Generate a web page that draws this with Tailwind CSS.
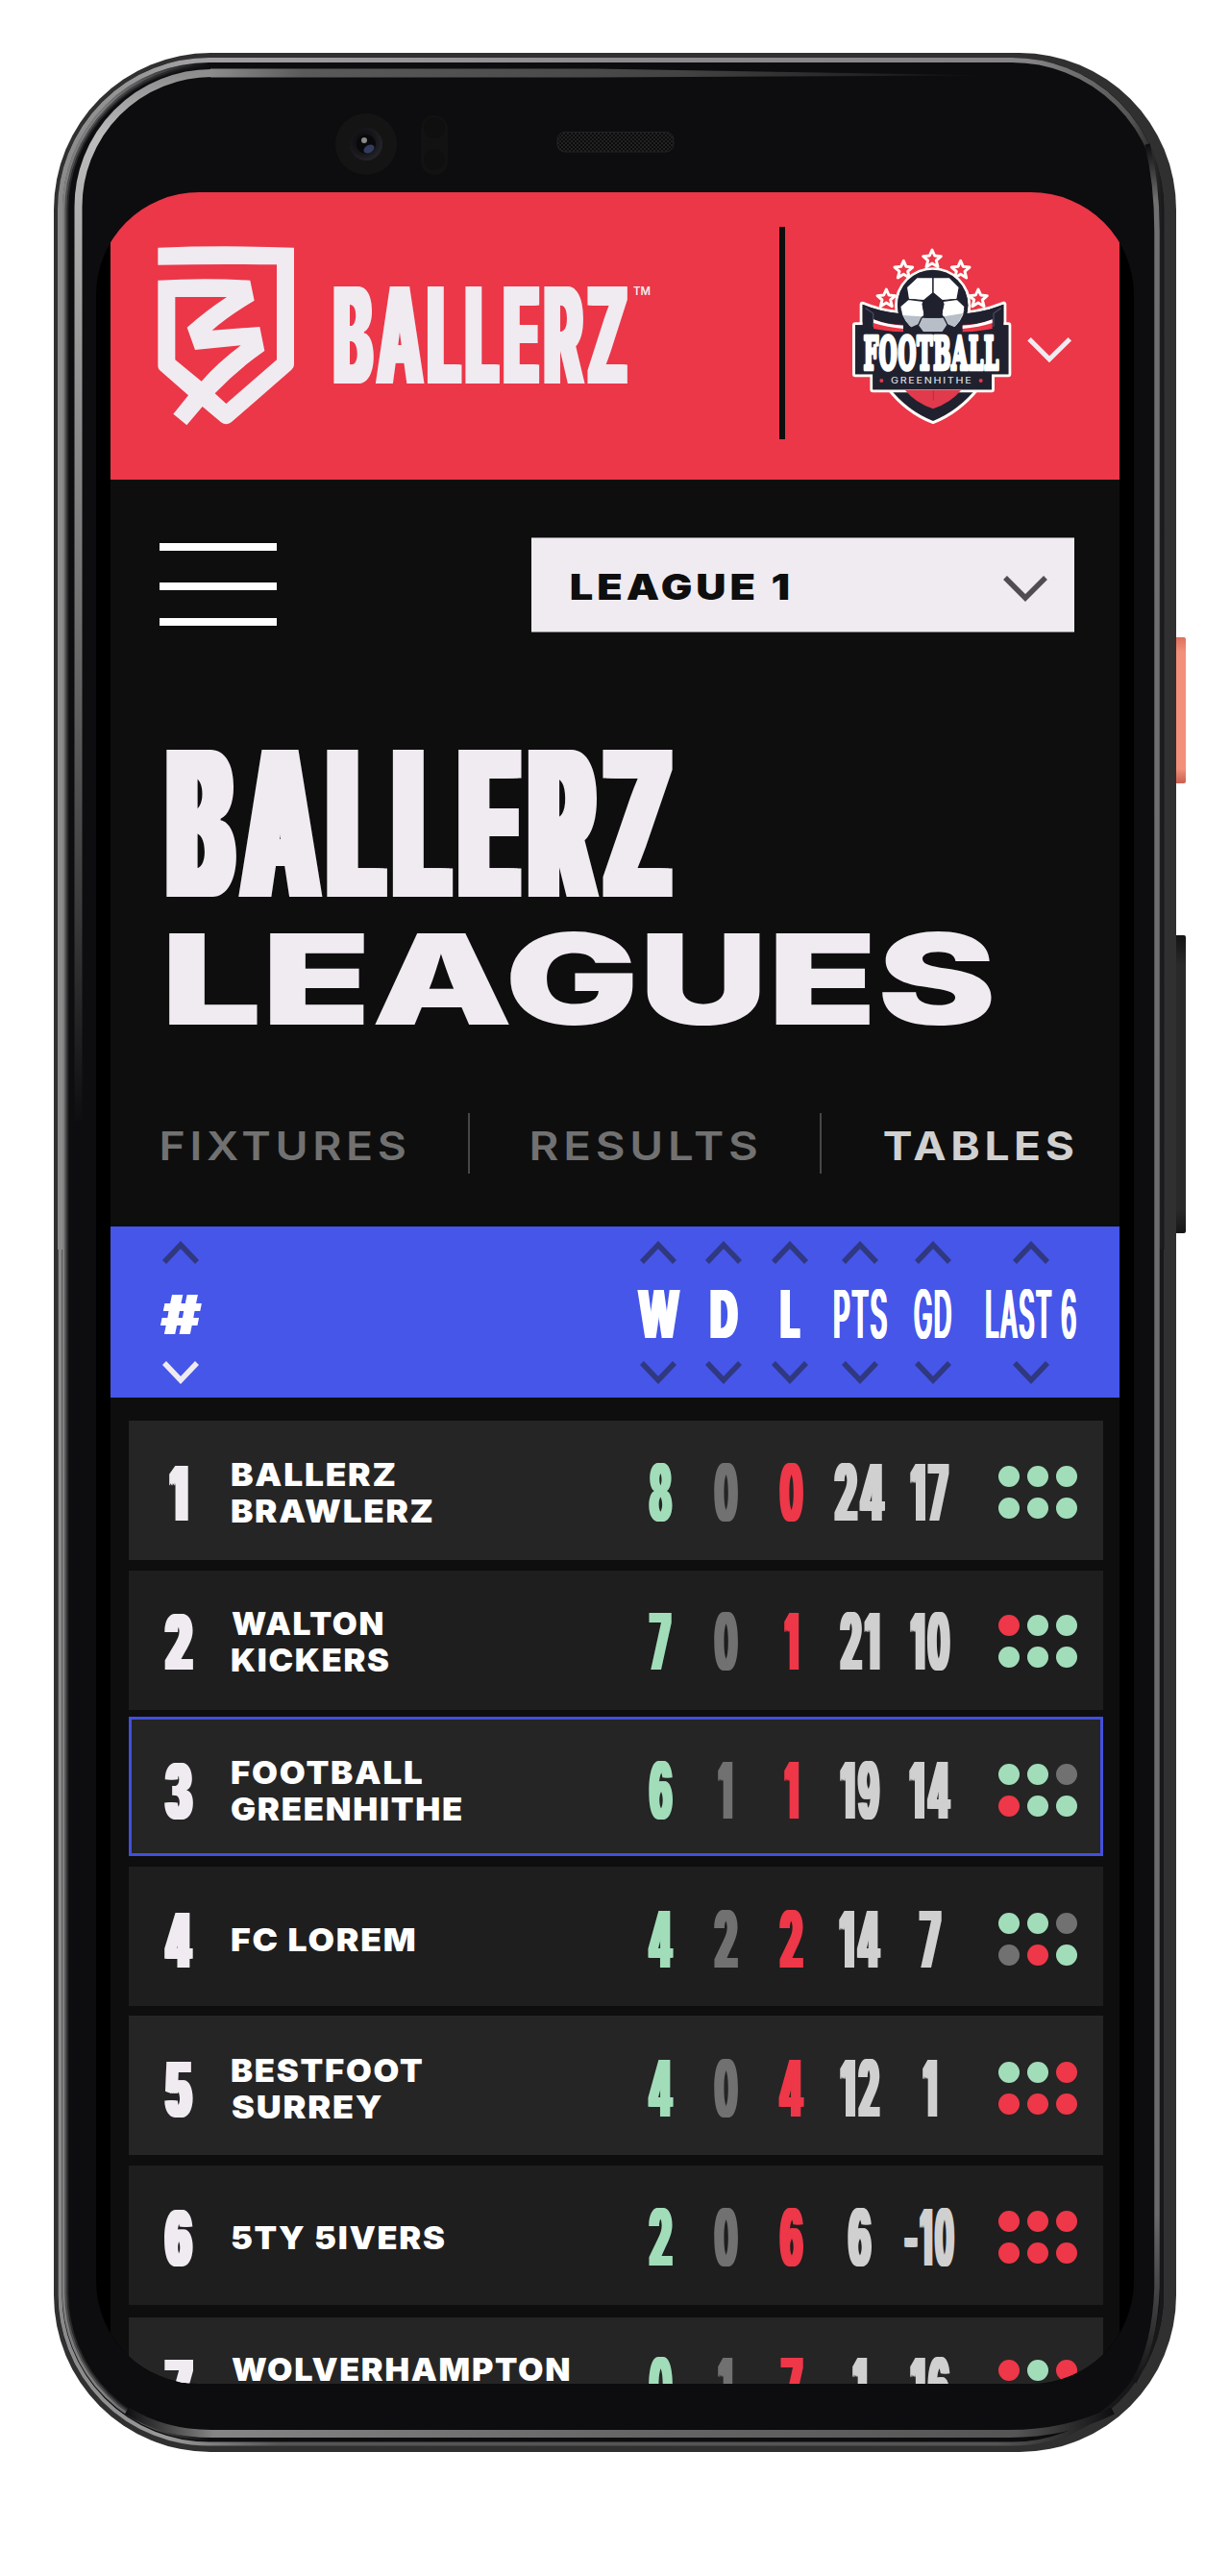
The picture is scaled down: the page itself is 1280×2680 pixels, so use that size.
<!DOCTYPE html>
<html lang="en">
<head>
<meta charset="utf-8">
<title>Ballerz Leagues</title>
<script src="https://cdn.jsdelivr.net/npm/@tailwindcss/browser@4"></script>
</head>
<body class="bg-white">
<main class="relative w-[1280px] h-[2680px] overflow-hidden pt-[200px] pl-[100px] font-['Inter',sans-serif]">

  <!-- handset body -->
  <svg class="absolute left-0 top-0" width="1280" height="2680" viewBox="0 0 1280 2680" fill="none">
    <defs>
      <linearGradient id="edge" gradientUnits="userSpaceOnUse" x1="60" y1="0" x2="1211" y2="0">
        <stop offset="0" stop-color="#8a8a8a"/><stop offset=".12" stop-color="#a2a0a2"/><stop offset=".5" stop-color="#8d8b8d"/><stop offset=".88" stop-color="#858385"/><stop offset=".97" stop-color="#555"/><stop offset="1" stop-color="#18181a"/>
      </linearGradient>
      <linearGradient id="edgeLow" gradientUnits="userSpaceOnUse" x1="60" y1="0" x2="1211" y2="0">
        <stop offset="0" stop-color="#8a8a8a"/><stop offset=".1" stop-color="#999"/><stop offset=".2" stop-color="#555"/><stop offset=".85" stop-color="#555"/><stop offset=".95" stop-color="#18181a"/>
      </linearGradient>
      <linearGradient id="soft" gradientUnits="userSpaceOnUse" x1="60" y1="0" x2="218" y2="0">
        <stop offset="0" stop-color="#999"/><stop offset=".3" stop-color="#999"/><stop offset="1" stop-color="#999" stop-opacity="0"/>
      </linearGradient>
      <linearGradient id="lineLeft" gradientUnits="userSpaceOnUse" x1="0" y1="76" x2="0" y2="1170">
        <stop offset="0" stop-color="#8d8d8d"/><stop offset=".06" stop-color="#bcbcbc"/><stop offset=".25" stop-color="#9a9a9a"/><stop offset=".5" stop-color="#737373"/><stop offset=".8" stop-color="#3a3a3b"/><stop offset="1" stop-color="#0d0d0f"/>
      </linearGradient>
      <linearGradient id="lineTop" gradientUnits="userSpaceOnUse" x1="218" y1="0" x2="1030" y2="0">
        <stop offset="0" stop-color="#8d8d8d"/><stop offset=".12" stop-color="#5a5a5a"/><stop offset=".6" stop-color="#444"/><stop offset="1" stop-color="#0d0d0f"/>
      </linearGradient>
      <linearGradient id="lineRight" gradientUnits="userSpaceOnUse" x1="0" y1="150" x2="0" y2="2490">
        <stop offset="0" stop-color="#0d0d0f"/><stop offset=".025" stop-color="#707070"/><stop offset=".92" stop-color="#6a6a6a"/><stop offset=".97" stop-color="#333"/><stop offset="1" stop-color="#0d0d0f"/>
      </linearGradient>
      <linearGradient id="lineBottom" gradientUnits="userSpaceOnUse" x1="130" y1="0" x2="1160" y2="0">
        <stop offset="0" stop-color="#0d0d0f"/><stop offset=".09" stop-color="#858585"/><stop offset=".5" stop-color="#666"/><stop offset=".9" stop-color="#555"/><stop offset="1" stop-color="#0d0d0f"/>
      </linearGradient>
      <linearGradient id="power" x1="0" y1="0" x2="0" y2="1">
        <stop offset="0" stop-color="#df6f5d"/><stop offset=".1" stop-color="#f29079"/><stop offset=".9" stop-color="#f29079"/><stop offset="1" stop-color="#c95f50"/>
      </linearGradient>
      <linearGradient id="volume" x1="0" y1="0" x2="0" y2="1">
        <stop offset="0" stop-color="#141414"/><stop offset=".1" stop-color="#292929"/><stop offset=".92" stop-color="#292929"/><stop offset="1" stop-color="#161616"/>
      </linearGradient>
      <radialGradient id="lens" cx=".4" cy=".4" r=".65"><stop offset="0" stop-color="#0a0a0c"/><stop offset=".6" stop-color="#17171b"/><stop offset="1" stop-color="#26262b"/></radialGradient>
      <pattern id="mesh" width="4" height="4" patternUnits="userSpaceOnUse"><rect width="4" height="4" fill="#0c0c0c"/><rect width="2" height="2" fill="#222"/><rect x="2" y="2" width="2" height="2" fill="#222"/></pattern>
    </defs>
    <rect x="1216" y="663" width="18" height="152" rx="2" fill="url(#power)"/>
    <rect x="1216" y="973" width="18" height="310" rx="2" fill="url(#volume)"/>
    <rect x="56" y="55" width="1168" height="2496" rx="163" fill="#303030"/>
    <rect x="60" y="60" width="1151" height="2484" rx="157" fill="#0d0d0f"/>
    <path d="M62.500 1300V218A155 155 0 0 1 218 62.500H1052A156 156 0 0 1 1209 218V1300" stroke="url(#edge)" stroke-width="5"/>
    <path d="M62.500 1300V2386A155 155 0 0 0 218 2542.500H1052A156 156 0 0 0 1209 2386V1300" stroke="url(#edgeLow)" stroke-width="4"/>
    <g stroke="url(#soft)" stroke-width="2.500">
      <path opacity=".8" d="M66 2386V218A152 152 0 0 1 218 66M66 2386A152 152 0 0 0 218 2538"/>
      <path opacity=".45" d="M68 2386V218A150 150 0 0 1 218 68M68 2386A150 150 0 0 0 218 2536"/>
      <path opacity=".2" d="M70 2386V218A148 148 0 0 1 218 70M70 2386A148 148 0 0 0 218 2534"/>
    </g>
    <path d="M81.500 1170V216A139 139 0 0 1 220 76" stroke="url(#lineLeft)" stroke-width="8"/>
    <path d="M219 71.500L620 71.500L1030 78.500L620 80.500H219Z" fill="url(#lineTop)"/>
    <path d="M1194 150Q1204 190 1204 240V2380Q1202 2440 1180 2478" stroke="url(#lineRight)" stroke-width="5.500"/>
    <path d="M132 2508Q170 2532 220 2532H1050Q1110 2532 1158 2508" stroke="url(#lineBottom)" stroke-width="8"/>
    <circle cx="381" cy="150" r="32" fill="#141414"/>
    <circle cx="381" cy="150" r="17" fill="url(#lens)"/>
    <circle cx="381" cy="150" r="10" fill="#09090b"/>
    <circle cx="379" cy="146" r="3" fill="#8a8a8c"/>
    <ellipse cx="384" cy="155" rx="6" ry="4" transform="rotate(-30 384 155)" fill="#333c5e"/>
    <rect x="438" y="120" width="28" height="62" rx="14" fill="#121212"/>
    <circle cx="452" cy="133" r="11" fill="#0f0f0f"/><circle cx="452" cy="166" r="11" fill="#0f0f0f"/>
    <rect x="580" y="137.500" width="121" height="20.500" rx="8" fill="url(#mesh)" stroke="#222"/>
  </svg>

  <!-- screen -->
  <div class="relative w-[1080px] h-[2280px] rounded-[107px] overflow-hidden bg-black px-[15px]">
   <div class="w-[1050px] h-full bg-[#0e0e0e]">

    <header class="h-[299px] bg-[#eb3748] flex items-start pl-[35px]">
      <svg class="mt-10 shrink-0" width="170" height="220" viewBox="0 0 510 660" fill="#f0ebf1" fill-rule="evenodd">
        <path d="M43 53Q250 45 468 53V418Q468 428 460 434L272 598Q256 610 240 598L182 549L133 607L91 572L138 514L48 435Q43 430 43 422V155Q190 146 331 155L344 218Q260 268 212 311L361 300L376 375Q290 435 221 508L256 540L414 403V106Q230 103 43 107ZM97 207H258Q190 252 134 302L159 372L302 358Q230 412 179 470L97 403Z"/>
      </svg>
      <div data-fit data-pad="0.05" class="mt-[98px] ml-[27px] w-[306px] h-[101px] text-[140px] font-extrabold tracking-[0.08em] text-[#f0ebf1] shrink-0"><span>BALLERZ</span></div>
      <div data-fit data-pad="0" class="mt-[98px] ml-[6px] w-[18px] h-[9px] text-[13px] font-semibold tracking-[0em] text-[#f0ebf1] shrink-0"><span>TM</span></div>
      <div class="mt-[36px] ml-[134px] w-[6px] h-[221px] bg-[#0e0e0e] shrink-0"></div>
      <svg class="mt-10 ml-[43px] shrink-0" width="280" height="220" viewBox="0 0 840 660">
        <defs>
          <path id="star" d="M0-28L8-10L28-8L13 5L18 25L0 14L-18 25L-13 5L-28-8L-8-10Z"/>
          <clipPath id="ballClip"><circle cx="332" cy="224" r="102"/></clipPath>
        </defs>
        <g fill="#eb3748" stroke="#fffdf8" stroke-width="9" stroke-linejoin="round">
          <use href="#star" x="330" y="88"/><use href="#star" x="241" y="122"/><use href="#star" x="419" y="122"/><use href="#star" x="187" y="211"/><use href="#star" x="474" y="211"/>
        </g>
        <g fill="#20212f" stroke="#fffdf8" stroke-width="18" stroke-linejoin="round" paint-order="stroke">
          <path d="M196 490Q252 562 333 594Q412 562 470 490Z"/>
          <path d="M113 230Q165 252 222 258H444Q500 252 553 230V320H113Z"/>
          <path d="M90 295H568V448H516V496H145V448H90Z"/>
          <circle cx="332" cy="234" r="110"/>
        </g>
        <path d="M113 230Q165 252 230 258H438Q500 252 553 230V320H113Z" fill="#20212f"/>
        <path d="M90 295H568V448H516V496H145V448H90Z" fill="#20212f"/>
        <path d="M122 242L146 258V300M545 242L522 258V300" fill="none" stroke="#474a5c" stroke-width="4"/>
        <path d="M147 277Q190 294 240 294V318Q180 312 147 306Z" fill="#eb3748"/><path d="M147 277Q190 294 240 296V306Q190 302 147 288Z" fill="#fff"/>
        <path d="M518 277Q475 294 425 294V318Q485 312 518 306Z" fill="#eb3748"/><path d="M518 277Q475 294 425 296V306Q475 302 518 288Z" fill="#fff"/>
        <circle cx="332" cy="232" r="110" fill="#20212f"/>
        <g clip-path="url(#ballClip)" stroke="#20212f" stroke-width="4" stroke-linejoin="round" fill="#fff">
          <path d="M333 146V194L304 218L256 214L250 176L282 146Z"/>
          <path d="M333 146V194L362 218L408 214L415 176L385 146Z"/>
          <path d="M230 236L256 214L302 220L306 262L292 288L262 304L238 276Z"/>
          <path d="M432 236L408 214L364 220L360 262L374 288L404 304L428 276Z"/>
          <path d="M237 264L296 268L290 290L262 302Z" fill="#b7bec8" stroke="none"/>
          <path d="M427 258L366 268L374 290L404 302Z" fill="#b7bec8" stroke="none"/>
          <path d="M298 270H366L378 294L362 318H302L286 296Z" fill="#b7bec8"/>
          <path d="M333 208L366 228L356 270H308L300 228Z" fill="#20212f"/>
        </g>
        <path d="M150 316H515V328H150Z" fill="#20212f"/>
        <g transform="translate(116 433) scale(1 1.420)">
          <text x="0" y="0" textLength="424" lengthAdjust="spacingAndGlyphs" font-family="'DejaVu Serif','Liberation Serif',serif" font-weight="700" font-size="100" letter-spacing="4" fill="#fff" stroke="#fff" stroke-width="10" stroke-linejoin="round">FOOTBALL</text>
        </g>
        <circle cx="172" cy="468" r="6" fill="#eb3748"/><circle cx="482" cy="468" r="6" fill="#eb3748"/>
        <text x="201" y="477" textLength="256" lengthAdjust="spacingAndGlyphs" font-family="Inter,sans-serif" font-weight="500" font-size="25" letter-spacing="4" fill="#d9d9de">GREENHITHE</text>
        <path d="M246 498H420Q390 536 333 556Q276 536 246 498Z" fill="#e03a4c"/><path d="M334 498V530" stroke="#b9303f" stroke-width="3"/>
        <path d="M633 338L696 401L760 338" fill="none" stroke="#f0ebf1" stroke-width="15"/>
      </svg>
    </header>

    <div class="flex items-start justify-between pl-[51px] pr-[47px] pt-[60px] h-[281px]">
      <div class="mt-[6px] flex flex-col">
        <div class="w-[122px] h-[8px] bg-white"></div><div class="mt-[33px] w-[122px] h-[8px] bg-white"></div><div class="mt-[29px] w-[122px] h-[8px] bg-white"></div>
      </div>
      <div class="w-[565px] h-[99px] bg-[#f0ebf1] border-y border-[#8a888b] flex items-center justify-between pl-[41px] pr-[28px]">
        <div data-fit data-pad="0" class="mt-[3px] w-[226px] h-[27px] text-[37px] font-black tracking-[0.09em] text-[#0e0e0e]"><span>LEAGUE 1</span></div>
        <svg class="mt-[7px]" width="46" height="28" viewBox="0 0 46 28" fill="none"><path d="M2 3L23 24L44 3" stroke="#4f4d50" stroke-width="5.500"/></svg>
      </div>
    </div>

    <h1 class="pl-[58px] h-[378px] text-[#f0ebf1]">
      <div data-fit data-pad="0.075" class="w-[527px] h-[153px] text-[210px] font-extrabold tracking-[0.12em]"><span>BALLERZ</span></div>
      <div data-fit data-pad="0" class="ml-[3px] mt-[38px] w-[856px] h-[95px] text-[131px] font-black tracking-[0em]"><span>LEAGUES</span></div>
    </h1>

    <nav class="flex items-center justify-between pl-[54px] pr-[48px] h-[63px] text-[#717171]">
      <div data-fit data-pad="0" class="mt-[5px] w-[252px] h-[30px] text-[41px] font-semibold tracking-[0.1em]"><span>FIXTURES</span></div>
      <div class="w-[2px] h-[63px] bg-[#474747]"></div>
      <div data-fit data-pad="0" class="mt-[5px] w-[233px] h-[30px] text-[41px] font-semibold tracking-[0.1em]"><span>RESULTS</span></div>
      <div class="w-[2px] h-[63px] bg-[#474747]"></div>
      <div data-fit data-pad="0" class="mt-[5px] w-[197px] h-[30px] text-[41px] font-bold tracking-[0.1em] text-[#d0d0d0]"><span>TABLES</span></div>
    </nav>

    <div id="head" class="mt-[55px] h-[178px] bg-[#4556e9] grid grid-cols-[145px_391px_68px_68px_70px_76px_75px_129px_28px] text-white"></div>
    <div id="rows" class="pl-[19px] pt-[24px]"></div>
   </div>
  </div>
</main>

<script>
const W = 'text-[#a2ddba]', D = 'text-[#717171]', L = 'text-[#ee3748]', N = 'text-[#d0d0d0]';

// column: label, text width, text height, font classes, active sort direction, stem padding
const cols = [
  ['#', 44, 41, 'text-[56px] font-black italic tracking-[0em]', true, 0.02],
  null,
  ['W', 45, 50, 'text-[70px] font-extrabold tracking-[0em]', false, .04],
  ['D', 29, 50, 'text-[70px] font-extrabold tracking-[0em]', false, .05],
  ['L', 21, 50, 'text-[70px] font-extrabold tracking-[0em]', false, .05],
  ['PTS', 55, 50, 'text-[70px] font-medium tracking-[0.06em]', false, .04],
  ['GD', 39, 50, 'text-[70px] font-medium tracking-[0.06em]', false, .04],
  ['LAST 6', 94, 50, 'text-[70px] font-medium tracking-[0.06em]', false, .04],
];
const chevron = (d, c) => `<svg width="38" height="24" viewBox="0 0 38 24" fill="none"><path d="${d}" stroke="${c}" stroke-width="5.500"/></svg>`;
document.getElementById('head').innerHTML = cols.map(c => c ? `
  <div class="flex flex-col items-center pt-[15px]">
    ${chevron('M2 22L19 4L36 22', '#30387f')}
    <div class="h-[101px] pt-[3px] flex items-center justify-center"><div data-fit data-pad="${c[5]}" class="${c[3]} shrink-0" style="width:${c[1]}px;height:${c[2]}px"><span>${c[0]}</span></div></div>
    ${chevron('M2 2L19 20L36 2', c[4] ? '#f0ebf1' : '#30387f')}
  </div>` : '<div></div>').join('');

// top: row's y in the list; last: w = win, l = loss, d = draw
const teams = [
  { top: 0,     names: [['BALLERZ', 170], ['BRAWLERZ', 209]], s: ['8', '0', '0', '24', '17'], last: 'wwwwww' },
  { top: 155.5, names: [['WALTON', 157], ['KICKERS', 164]], s: ['7', '0', '1', '21', '10'], last: 'lwwwww' },
  { top: 308,   names: [['FOOTBALL', 198], ['GREENHITHE', 239]], s: ['6', '1', '1', '19', '14'], last: 'wwdlww', mine: true },
  { top: 463.5, names: [['FC LOREM', 190]], s: ['4', '2', '2', '14', '7'], last: 'wwddlw' },
  { top: 619,   names: [['BESTFOOT', 198], ['SURREY', 156]], s: ['4', '0', '4', '12', '1'], last: 'wwllll' },
  { top: 774.5, names: [['5TY 5IVERS', 222]], s: ['2', '0', '6', '6', '-10'], last: 'llllll' },
  { top: 933,   names: [['WOLVERHAMPTON', 351], ['', 0]], s: ['0', '1', '7', '1', '16'], last: 'lwllll' },
];
const dw = { '1': 15.5, '4': 27, '7': 24, '-': 9 };
const numWidth = s => [...s].reduce((t, ch) => t + (dw[ch] || 25), 0) + (s.length - 1) * 1.3;
const dot = { w: 'bg-[#a2ddba]', l: 'bg-[#ee3748]', d: 'bg-[#717171]' };
document.getElementById('rows').innerHTML = teams.map((t, i) => {
  const gap = i ? t.top - teams[i - 1].top - 145 : 0;
  const shift = 46.5 + i * 155 - t.top - (t.mine ? 3 : 0);
  const bg = i % 2 ? 'bg-[#1e1e1e]' : 'bg-[#252525]';
  return `
  <div class="w-[1014px] h-[145px] ${bg} ${t.mine ? 'border-[3px] border-[#4350dc]' : ''}" style="margin-top:${gap}px">
   <div class="${t.mine ? '-mx-[3px]' : ''} grid grid-cols-[104px_415px_68px_68px_69px_73px_73px_144px] items-start" style="padding-top:${shift}px">
    <div class="flex justify-center"><div data-fit data-pad="0.085" class="h-[57px] text-[79px] font-extrabold tracking-[0em] text-[#f0ebf1]" style="width:${i ? 30 : 20}px"><span>${i + 1}</span></div></div>
    <div class="pl-[3px] h-[61px] -mt-[2px] flex flex-col justify-center gap-[14px] text-white">
      ${t.names.map(n => `<div data-fit data-pad="0" class="h-[24px] text-[33px] font-black tracking-[0.05em]" style="width:${n[1]}px"><span>${n[0]}</span></div>`).join('')}
    </div>
    ${t.s.map((v, k) => `<div class="flex justify-center -mt-[2px]"><div data-fit data-pad="0.075" class="h-[59px] text-[81px] font-bold tracking-[0.12em] ${[W, D, L, N, N][k]}" style="width:${numWidth(v)}px"><span>${v}</span></div></div>`).join('')}
    <div class="pl-[35px] grid grid-cols-[22px_22px_22px] gap-x-2 gap-y-[11px]">${[...t.last].map(r => `<i class="w-[22px] h-[22px] rounded-full ${dot[r]}"></i>`).join('')}</div>
   </div>
  </div>`;
}).join('');

// Scales every [data-fit] label so its capitals fill the box; data-pad widens the stems (in em).
// Sizes are read from the class list, so fitting does not wait for the stylesheet.
const ctx = document.createElement('canvas').getContext('2d');
const weights = { 'font-normal': 400, 'font-medium': 500, 'font-semibold': 600, 'font-bold': 700, 'font-extrabold': 800, 'font-black': 900 };
document.querySelectorAll('[data-fit]').forEach(box => {
  const span = box.firstElementChild, text = span.textContent, cls = box.className;
  if (!text) return;
  const num = re => parseFloat((cls.match(re) || [0, 0])[1]);
  const fs = num(/text-\[([\d.]+)px\]/), ls = num(/tracking-\[([\d.]+)em\]/) * fs, pad = parseFloat(box.dataset.pad) * fs;
  const w = parseFloat(box.style.width) || num(/(?:^|\s)w-\[([\d.]+)px\]/);
  const h = parseFloat(box.style.height) || num(/(?:^|\s)h-\[([\d.]+)px\]/);
  const weight = weights[cls.split(/\s+/).find(c => weights[c])];
  ctx.font = `${/italic/.test(cls) ? 'italic' : 'normal'} ${weight} ${fs}px Inter, sans-serif`;
  ctx.letterSpacing = '0px';
  const m = ctx.measureText(text);
  const cap = ctx.measureText('H').actualBoundingBoxAscent;
  const base = fs / 2 + (m.fontBoundingBoxAscent - m.fontBoundingBoxDescent) / 2;
  const ink = m.actualBoundingBoxRight + m.actualBoundingBoxLeft + ls * (text.length - 1) + 2 * pad;
  const sx = w / ink, sy = h / cap;
  Object.assign(span.style, {
    display: 'block', width: 'max-content', whiteSpace: 'pre', lineHeight: '1', transformOrigin: '0 0',
    transform: `matrix(${sx},0,0,${sy},${sx * (m.actualBoundingBoxLeft + pad)},${-sy * (base - cap)})`,
  });
  if (pad) span.style.textShadow = [-1, -.5, .5, 1].map(k => `${k * pad}px 0 0 currentColor`).join(',');
});
</script>
</body>
</html>
